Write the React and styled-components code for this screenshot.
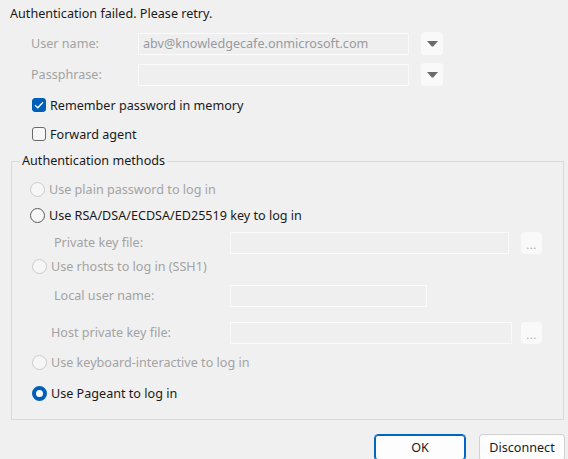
import React from 'react';
import styled, { createGlobalStyle } from 'styled-components';

const GlobalStyle = createGlobalStyle`
  html, body {
    margin: 0;
    padding: 0;
    background: #f0f0f0;
  }
  body {
    font-family: "Noto Sans", "Open Sans", sans-serif;
    font-size: 12.6px;
    color: #1a1a1a;
  }
`;

const Dialog = styled.div`
  width: 568px;
  height: 459px;
  overflow: hidden;
  padding: 6px 0 0 10px;
  box-sizing: border-box;
`;

const Message = styled.div`
  height: 16px;
  line-height: 16px;
  margin-bottom: 10px;
`;

const FieldRow = styled.div`
  display: flex;
  align-items: center;
  height: 23px;
  padding-left: 21px;
  margin-bottom: ${(p) => p.$gap || 0}px;
`;

const FieldLabel = styled.span`
  width: ${(p) => p.$w || 107}px;
  color: #a3a3a3;
  flex-shrink: 0;
`;

const TextBox = styled.div`
  width: ${(p) => p.$w}px;
  height: 22px;
  box-sizing: border-box;
  border: 1px solid #fafafa;
  background: #efefef;
  color: #979aa1;
  line-height: 20px;
  padding-left: 4px;
  white-space: nowrap;
  overflow: hidden;
`;

const DropButton = styled.div`
  margin-left: 12px;
  width: 22px;
  height: 23px;
  border-radius: 4px;
  background: #f9f9f9;
  display: flex;
  align-items: center;
  justify-content: center;
`;

const BrowseButton = styled.div`
  margin-left: ${(p) => p.$ml}px;
  width: 21px;
  height: 22px;
  border-radius: 4px;
  background: #f9f9f9;
  color: #a8a8a8;
  font-size: 11px;
  line-height: 26px;
  text-align: center;
  letter-spacing: 0.5px;
`;

const CheckRow = styled.label`
  display: flex;
  align-items: center;
  height: 16px;
  padding-left: 22px;
  margin-top: ${(p) => p.$mt}px;
  gap: 4px;
`;

const Box = styled.span`
  width: 14px;
  height: 14px;
  box-sizing: border-box;
  border-radius: 3px;
  border: 1px solid ${(p) => (p.$checked ? '#005fb8' : '#6a6a6a')};
  background: ${(p) => (p.$checked ? '#005fb8' : '#f7f7f7')};
  display: flex;
  align-items: center;
  justify-content: center;
`;

const Group = styled.fieldset`
  margin: 11px 0 0 1px;
  padding: 0 0 8px 0;
  width: 553px;
  box-sizing: border-box;
  border: 1px solid #d9d9d9;
`;

const Legend = styled.legend`
  margin-left: 8px;
  padding: 0 2px;
  line-height: 16px;
`;

const Spacer = styled.div`
  height: 7px;
`;

const OptionRow = styled.div`
  display: flex;
  align-items: center;
  height: ${(p) => p.$h}px;
  padding-left: ${(p) => p.$indent}px;
  gap: 4px;
  color: ${(p) => (p.$disabled ? '#a3a3a3' : '#1a1a1a')};
`;

const SubRow = styled.div`
  display: flex;
  align-items: center;
  height: ${(p) => p.$h}px;
  padding-left: ${(p) => p.$indent}px;
`;

const Radio = styled.span`
  width: 15px;
  height: 15px;
  box-sizing: border-box;
  border-radius: 50%;
  flex-shrink: 0;
  background: ${(p) => (p.$checked ? '#ffffff' : '#f6f6f6')};
  border: ${(p) =>
    p.$checked
      ? '4px solid #005fb8'
      : p.$disabled
      ? '1px solid #cbcbcb'
      : '1px solid #5a5a5a'};
`;

const Footer = styled.div`
  display: flex;
  justify-content: flex-end;
  gap: 13px;
  padding-right: 3px;
  margin-top: 14px;
`;

const Button = styled.div`
  width: ${(p) => p.$w}px;
  height: 27px;
  box-sizing: border-box;
  border-radius: 4px;
  background: #fdfdfd;
  border: 1px solid ${(p) => (p.$primary ? '#0067c0' : '#d0d0d0')};
  border-bottom-color: ${(p) => (p.$primary ? '#0067c0' : '#b8b8b8')};
  box-shadow: ${(p) => (p.$primary ? 'inset 0 0 0 1px #0067c0' : 'none')};
  display: flex;
  align-items: center;
  justify-content: center;
  color: #1a1a1a;
`;

const Arrow = () => (
  <svg width="11" height="6" viewBox="0 0 11 6">
    <path d="M0 0 H11 L6.2 5.5 H4.8 Z" fill="#6b6b6b" />
  </svg>
);

const Tick = () => (
  <svg width="10" height="8" viewBox="0 0 10 8">
    <path d="M1 4.2 L3.8 6.8 L9 1.2" fill="none" stroke="#ffffff" strokeWidth="1.3" />
  </svg>
);

const methods = [
  { text: 'Use plain password to log in', h: 26, indent: 18, disabled: true },
  { text: 'Use RSA/DSA/ECDSA/ED25519 key to log in', h: 26, indent: 18 },
  { sub: 'Private key file:', h: 29, indent: 42, lw: 176, w: 279, browse: 12 },
  { text: 'Use rhosts to log in (SSH1)', h: 18, indent: 20, disabled: true },
  { sub: 'Local user name:', h: 41, indent: 42, lw: 176, w: 197 },
  { sub: 'Host private key file:', h: 33, indent: 39, lw: 179, w: 282, browse: 9 },
  { text: 'Use keyboard-interactive to log in', h: 26, indent: 20, disabled: true },
  { text: 'Use Pageant to log in', h: 36, indent: 20, checked: true },
];

export default function App() {
  return (
    <>
      <GlobalStyle />
      <Dialog>
        <Message>Authentication failed. Please retry.</Message>

        <FieldRow $gap={8}>
          <FieldLabel>User name:</FieldLabel>
          <TextBox $w={271}>abv@knowledgecafe.onmicrosoft.com</TextBox>
          <DropButton>
            <Arrow />
          </DropButton>
        </FieldRow>
        <FieldRow>
          <FieldLabel>Passphrase:</FieldLabel>
          <TextBox $w={271} />
          <DropButton>
            <Arrow />
          </DropButton>
        </FieldRow>

        <CheckRow $mt={11}>
          <Box $checked>
            <Tick />
          </Box>
          Remember password in memory
        </CheckRow>
        <CheckRow $mt={13}>
          <Box />
          Forward agent
        </CheckRow>

        <Group>
          <Legend>Authentication methods</Legend>
          <Spacer />
          {methods.map((m) =>
            m.sub ? (
              <SubRow key={m.sub} $h={m.h} $indent={m.indent}>
                <FieldLabel $w={m.lw}>{m.sub}</FieldLabel>
                <TextBox $w={m.w} />
                {m.browse && <BrowseButton $ml={m.browse}>...</BrowseButton>}
              </SubRow>
            ) : (
              <OptionRow key={m.text} $h={m.h} $indent={m.indent} $disabled={m.disabled}>
                <Radio $checked={m.checked} $disabled={m.disabled} />
                {m.text}
              </OptionRow>
            )
          )}
        </Group>

        <Footer>
          <Button $w={92} $primary>OK</Button>
          <Button $w={86}>Disconnect</Button>
        </Footer>
      </Dialog>
    </>
  );
}
